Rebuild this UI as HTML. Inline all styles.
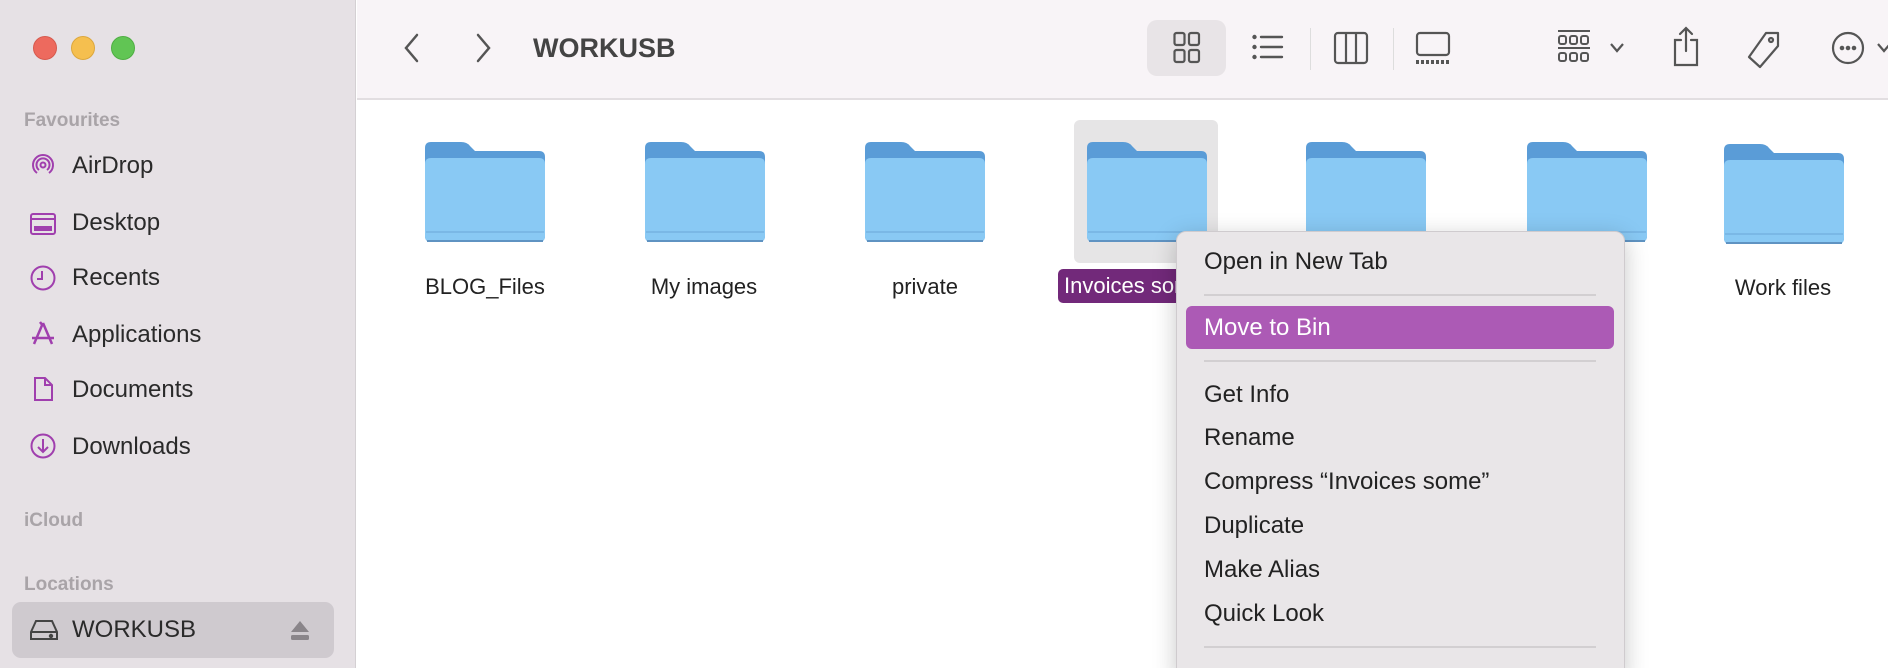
<!DOCTYPE html>
<html style="overflow:hidden;width:1888px;height:668px"><head><meta charset="utf-8"><style>
*{margin:0;padding:0;box-sizing:border-box}
body{width:1888px;height:668px;overflow:hidden;background:#fff;font-family:"Liberation Sans",sans-serif;position:relative;color:#222}
.a{position:absolute}
#side{left:0;top:0;width:356px;height:668px;background:#e6e1e5;border-right:1px solid #d4d0d3}
#tb{left:357px;top:0;width:1531px;height:100px;background:#f8f4f7;border-bottom:2px solid #e2dee1}
.dot{width:24px;height:24px;border-radius:50%;top:36px}
.hd{font-size:19px;font-weight:bold;color:#a9a4a8;left:24px}
.it{left:72px;font-size:24px;color:#2a2a2a;line-height:30px}
.ic{left:30px;width:26px;height:26px}
.fl{width:120px;height:104px}
.lb{font-size:22px;color:#222;text-align:center;width:200px;line-height:30px}
.mi{left:1204px;font-size:24px;color:#222;line-height:30px}
.sep{left:1204px;width:392px;height:2px;background:#d2cfd1}
</style></head><body>
<div id="side" class="a"></div>
<div class="a dot" style="left:33px;background:#ed6a5e;border:1px solid #d65a4e"></div>
<div class="a dot" style="left:71px;background:#f5bf4f;border:1px solid #dca73d"></div>
<div class="a dot" style="left:111px;background:#61c554;border:1px solid #4fae43"></div>

<div class="a hd" style="top:110px">Favourites</div>
<svg class="a ic" style="top:152px" viewBox="0 0 26 26" fill="none" stroke="#a03fae" stroke-width="2"><path d="M7 21A10 10 0 1 1 19 21"/><path d="M9 18A6.5 6.5 0 1 1 17 18"/><circle cx="13" cy="13" r="2.5"/></svg>
<div class="a it" style="top:151px">AirDrop</div>
<svg class="a ic" style="top:211px" viewBox="0 0 26 26" fill="none" stroke="#a03fae" stroke-width="2"><rect x="1" y="3" width="24" height="20" rx="2"/><path d="M1 8H25"/><rect x="5" y="16" width="16" height="3" fill="#a03fae"/></svg>
<div class="a it" style="top:208px">Desktop</div>
<svg class="a ic" style="top:265px" viewBox="0 0 26 26" fill="none" stroke="#a03fae" stroke-width="2"><circle cx="13" cy="13" r="11.5"/><path d="M12 6V14H7"/></svg>
<div class="a it" style="top:263px">Recents</div>
<svg class="a ic" style="top:320px" viewBox="0 0 26 26" fill="none" stroke="#a03fae" stroke-width="2.5"><path d="M13 3L4 24M13 3L22 24M10 2L13 6M2 18H24"/></svg>
<div class="a it" style="top:320px">Applications</div>
<svg class="a ic" style="top:376px" viewBox="0 0 26 26" fill="none" stroke="#a03fae" stroke-width="2"><path d="M5 2H15L22 9V24H5Z"/><path d="M15 2V9H22"/></svg>
<div class="a it" style="top:375px">Documents</div>
<svg class="a ic" style="top:433px" viewBox="0 0 26 26" fill="none" stroke="#a03fae" stroke-width="2"><circle cx="13" cy="13" r="11.5"/><path d="M13 6V19M8 14L13 19L18 14"/></svg>
<div class="a it" style="top:432px">Downloads</div>

<div class="a hd" style="top:510px">iCloud</div>
<div class="a hd" style="top:574px">Locations</div>
<div class="a" style="left:12px;top:602px;width:322px;height:56px;background:#cfcacf;border-radius:9px"></div>
<svg class="a" style="left:29px;top:618px;width:30px;height:24px" viewBox="0 0 30 24" fill="none" stroke="#444" stroke-width="2"><path d="M2 14L7 3H23L28 14V21H2Z"/><path d="M2 14H28"/><circle cx="22" cy="18" r="1.2" fill="#444"/></svg>
<div class="a it" style="top:615px">WORKUSB</div>
<svg class="a" style="left:290px;top:620px;width:20px;height:22px" viewBox="0 0 20 22" fill="#8a858a"><path d="M10 1L19 12H1Z"/><rect x="1" y="15" width="18" height="5" rx="1.5"/></svg>

<div id="tb" class="a"></div>
<svg class="a" style="left:400px;top:32px;width:24px;height:32px" viewBox="0 0 24 32" fill="none" stroke="#555" stroke-width="2.5" stroke-linecap="round"><path d="M17 3L6 16L17 29"/></svg>
<svg class="a" style="left:471px;top:32px;width:24px;height:32px" viewBox="0 0 24 32" fill="none" stroke="#555" stroke-width="2.5" stroke-linecap="round"><path d="M7 3L18 16L7 29"/></svg>
<div class="a" style="left:533px;top:33px;font-size:27px;font-weight:bold;color:#444">WORKUSB</div>
<div class="a" style="left:1147px;top:20px;width:79px;height:56px;background:#e8e4e7;border-radius:10px"></div>
<svg class="a" style="left:1173px;top:31px;width:28px;height:34px" viewBox="0 0 28 34" fill="none" stroke="#555" stroke-width="2.2"><rect x="1.5" y="2" width="10" height="12" rx="2"/><rect x="16" y="2" width="10" height="12" rx="2"/><rect x="1.5" y="19" width="10" height="12" rx="2"/><rect x="16" y="19" width="10" height="12" rx="2"/></svg>
<svg class="a" style="left:1252px;top:33px;width:32px;height:30px" viewBox="0 0 32 30" fill="none" stroke="#555" stroke-width="2.4" stroke-linecap="round"><path d="M9 4H30M9 14H30M9 24H30"/><circle cx="2.5" cy="4" r="1" fill="#555"/><circle cx="2.5" cy="14" r="1" fill="#555"/><circle cx="2.5" cy="24" r="1" fill="#555"/></svg>
<div class="a" style="left:1310px;top:28px;width:1px;height:42px;background:#ddd"></div>
<svg class="a" style="left:1333px;top:31px;width:36px;height:34px" viewBox="0 0 36 34" fill="none" stroke="#555" stroke-width="2.2"><rect x="2" y="2" width="32" height="30" rx="3"/><path d="M13 2V32M23 2V32"/></svg>
<div class="a" style="left:1393px;top:28px;width:1px;height:42px;background:#ddd"></div>
<svg class="a" style="left:1415px;top:31px;width:36px;height:34px" viewBox="0 0 36 34" fill="none" stroke="#555" stroke-width="2.2"><rect x="2" y="2" width="32" height="22" rx="3"/><path d="M1 31H35" stroke-dasharray="3 2" stroke-width="4"/></svg>
<svg class="a" style="left:1557px;top:29px;width:34px;height:36px" viewBox="0 0 34 36" fill="none" stroke="#555" stroke-width="2"><path d="M1 2H33M1 19H33"/><rect x="2" y="7" width="7" height="8" rx="2"/><rect x="13" y="7" width="7" height="8" rx="2"/><rect x="24" y="7" width="7" height="8" rx="2"/><rect x="2" y="24" width="7" height="8" rx="2"/><rect x="13" y="24" width="7" height="8" rx="2"/><rect x="24" y="24" width="7" height="8" rx="2"/></svg>
<svg class="a" style="left:1609px;top:42px;width:16px;height:12px" viewBox="0 0 16 12" fill="none" stroke="#555" stroke-width="2.2"><path d="M2 2L8 9L14 2"/></svg>
<svg class="a" style="left:1671px;top:25px;width:30px;height:42px" viewBox="0 0 30 42" fill="none" stroke="#555" stroke-width="2.2" stroke-linecap="round"><path d="M10 15H4V40H26V15H20"/><path d="M15 3V26M9 9L15 3L21 9"/></svg>
<svg class="a" style="left:1746px;top:30px;width:36px;height:40px" viewBox="0 0 36 40" fill="none" stroke="#555" stroke-width="2.2"><path d="M20 3H32V16L14 37L3 27Z" stroke-linejoin="round"/><circle cx="25" cy="10" r="2"/></svg>
<svg class="a" style="left:1830px;top:30px;width:36px;height:36px" viewBox="0 0 36 36" fill="none" stroke="#555" stroke-width="2.2"><circle cx="18" cy="18" r="15"/><circle cx="12" cy="18" r="1.2" fill="#555"/><circle cx="18" cy="18" r="1.2" fill="#555"/><circle cx="24" cy="18" r="1.2" fill="#555"/></svg>
<svg class="a" style="left:1876px;top:42px;width:16px;height:12px" viewBox="0 0 16 12" fill="none" stroke="#555" stroke-width="2.2"><path d="M2 2L8 9L14 2"/></svg>

<div class="a" style="left:1074px;top:120px;width:144px;height:143px;background:#e6e5e6;border-radius:6px"></div>

<svg width="0" height="0" style="position:absolute"><defs><symbol id="f" viewBox="0 0 120 104"><path d="M0 8Q0 2 6 2H36Q42 2 45 6L50 11H114Q120 11 120 17V96Q120 102 114 102H6Q0 102 0 96Z" fill="#5a9cd7"/><path d="M0 24Q0 18 6 18H114Q120 18 120 24V96Q120 102 114 102H6Q0 102 0 96Z" fill="#89c9f4"/><path d="M1 92H119" stroke="#7ab8e6" stroke-width="2"/><path d="M2 101H118" stroke="#5f93c2" stroke-width="2"/></symbol></defs></svg>
<svg class="a fl" style="left:425px;top:140px"><use href="#f"/></svg>
<svg class="a fl" style="left:645px;top:140px"><use href="#f"/></svg>
<svg class="a fl" style="left:865px;top:140px"><use href="#f"/></svg>
<svg class="a fl" style="left:1087px;top:140px"><use href="#f"/></svg>
<svg class="a fl" style="left:1306px;top:140px"><use href="#f"/></svg>
<svg class="a fl" style="left:1527px;top:140px"><use href="#f"/></svg>
<svg class="a fl" style="left:1724px;top:142px"><use href="#f"/></svg>

<div class="a lb" style="left:385px;top:272px">BLOG_Files</div>
<div class="a lb" style="left:604px;top:272px">My images</div>
<div class="a lb" style="left:825px;top:272px">private</div>
<div class="a" style="left:1058px;top:269px;width:130px;height:34px;background:#72297a;border-radius:5px;color:#fff;font-size:22px;line-height:34px;padding-left:6px;white-space:nowrap;overflow:hidden">Invoices some</div>
<div class="a lb" style="left:1560px;top:272px;width:80px;text-align:left">k up</div>
<div class="a lb" style="left:1683px;top:273px">Work files</div>

<div class="a" style="left:1176px;top:231px;width:449px;height:450px;background:#e9e6e8;border:1px solid #cfcbce;border-radius:10px;box-shadow:0 6px 24px rgba(0,0,0,.22)"></div>
<div class="a mi" style="top:247px">Open in New Tab</div>
<div class="sep a" style="top:294px"></div>
<div class="a" style="left:1186px;top:306px;width:428px;height:43px;background:#ac5ab5;border-radius:6px"></div>
<div class="a mi" style="top:313px;color:#fff">Move to Bin</div>
<div class="sep a" style="top:360px"></div>
<div class="a mi" style="top:380px">Get Info</div>
<div class="a mi" style="top:423px">Rename</div>
<div class="a mi" style="top:467px">Compress “Invoices some”</div>
<div class="a mi" style="top:511px">Duplicate</div>
<div class="a mi" style="top:555px">Make Alias</div>
<div class="a mi" style="top:599px">Quick Look</div>
<div class="sep a" style="top:646px"></div>
</body></html>
